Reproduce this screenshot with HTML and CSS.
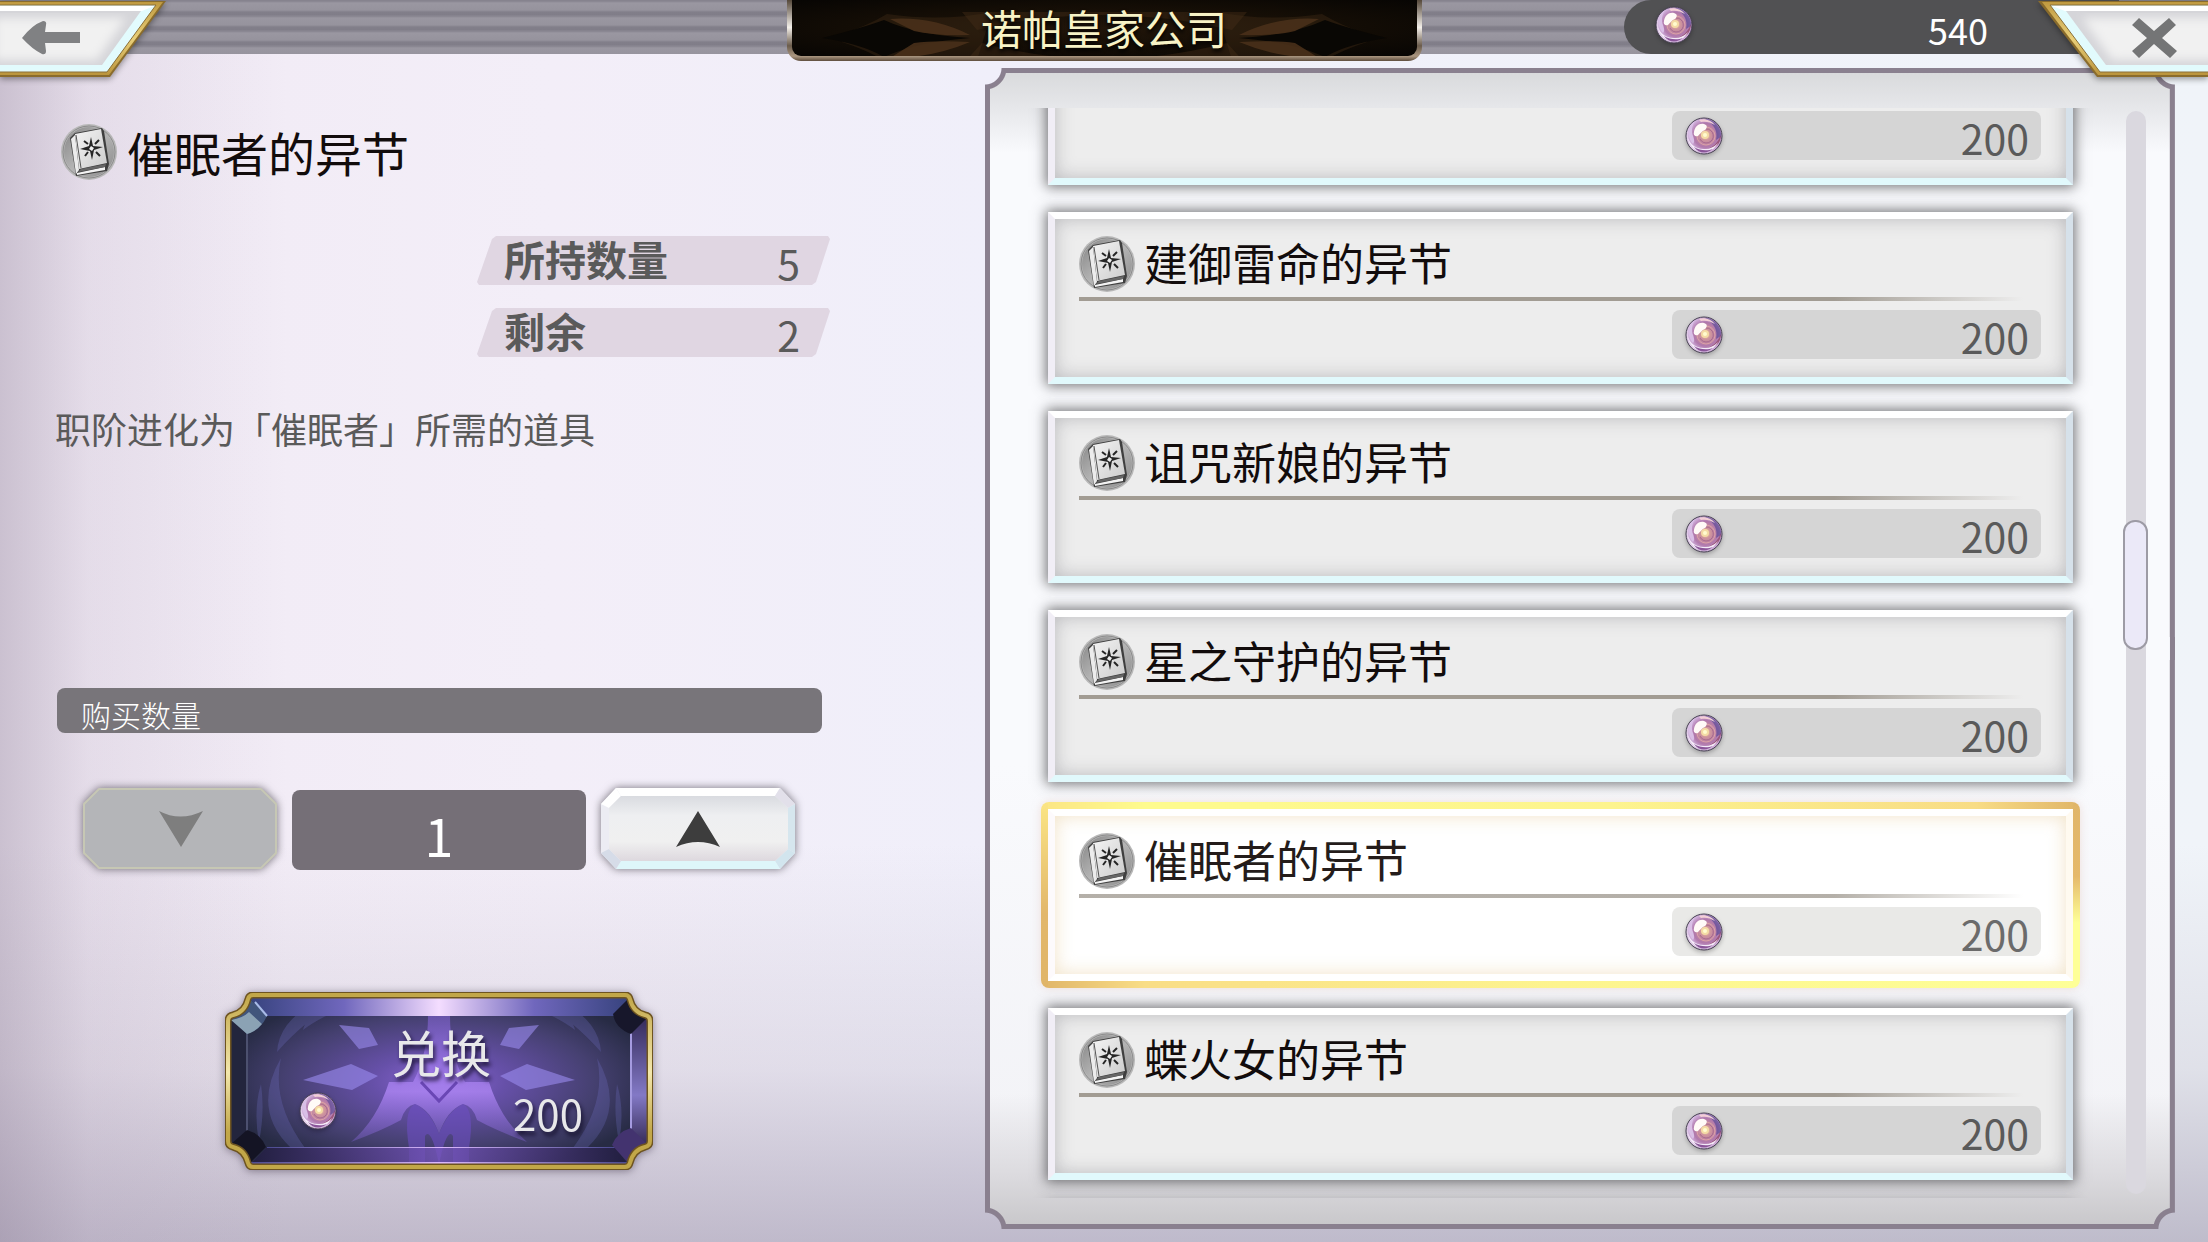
FILE: index.html
```html
<!DOCTYPE html>
<html lang="zh-CN">
<head>
<meta charset="utf-8">
<meta name="viewport" content="width=device-width, initial-scale=1">
<title>诺帕皇家公司</title>
<link rel="stylesheet" href="styles.css">
</head>
<body>
<svg class="defs" aria-hidden="true">
  <defs>
    <radialGradient id="gem-body" cx="55%" cy="48%" r="55%">
      <stop offset="0" stop-color="#f3d9a4"/><stop offset=".25" stop-color="#cf949c"/>
      <stop offset=".6" stop-color="#b078ac"/><stop offset=".85" stop-color="#cfaeda"/><stop offset="1" stop-color="#eadcf0"/>
    </radialGradient>
    <linearGradient id="disc" x1="0" x2="1" y1="0" y2="1">
      <stop offset="0" stop-color="#858585"/><stop offset=".5" stop-color="#b4b4b4"/><stop offset="1" stop-color="#8a8a8a"/>
    </linearGradient>
    <linearGradient id="cover" x1="0" x2="1" y1="0" y2="1">
      <stop offset="0" stop-color="#f4f4f4"/><stop offset="1" stop-color="#cccccc"/>
    </linearGradient>
    <linearGradient id="gold" x1="0" x2="0" y1="0" y2="1">
      <stop offset="0" stop-color="#c09a40"/><stop offset=".5" stop-color="#e9cf79"/><stop offset="1" stop-color="#bb953c"/>
    </linearGradient>
    <filter id="soft"><feGaussianBlur stdDeviation="5"/></filter>
  </defs>
  <symbol id="gem" viewBox="0 0 38 38">
    <circle cx="19" cy="19" r="18" fill="url(#gem-body)"/>
    <path d="M20 2c9 0 17 8 16 18l-5 3c2-9-2-16-11-21z" fill="#5d4c96" opacity=".7"/>
    <path d="M36 18c0 9-6 14-14 14 6-2 10-5 14-14z" fill="#8c3f5e" opacity=".7"/>
    <path d="M2 15c0 10 7 17 17 17 6 0 10-2 14-6-4 7-9 10-16 9C8 34 2 26 2 15z" fill="#f4eaf8"/>
    <path d="M9 30c6 4 14 4 19 2-6 5-14 5-19-2z" fill="#8a5599"/>
    <path d="M4 20C2 13 5 7 10 4c-3 5-4 10-2 15 1 3 2 6 0 8-2-2-3-4-4-7z" fill="#d9bfe6"/>
    <path d="M14 3c6-2 12 0 16 5-5-3-9-4-14-3z" fill="#f3cfd6"/>
    <circle cx="21" cy="19" r="9" fill="none" stroke="#e3a9a4" stroke-width="1" opacity=".8"/>
    <path d="M21 12a7 7 0 1 1-6 10" fill="none" stroke="#96547d" stroke-width="1" opacity=".6"/>
    <path d="M9 15c1-6 5-9 10-8 3 1 4 3 1 6-3 1-5 4-7 6-3 1-5-1-4-4z" fill="#fffaf7"/>
    <circle cx="20" cy="18" r="4" fill="#f4dba5"/><circle cx="20" cy="18" r="2" fill="#fffbcf"/>
    <circle cx="19" cy="19" r="18" fill="none" stroke="#443d50" stroke-width="1"/>
  </symbol>
  <symbol id="book" viewBox="0 0 56 56">
    <circle cx="28" cy="28" r="28" fill="#b8b8b8"/>
    <circle cx="28" cy="28" r="26" fill="none" stroke="#8b8b8b"/>
    <circle cx="28" cy="28" r="25" fill="url(#disc)"/>
    <path d="M9 14 14 9 41 4 43 7 48 40 46 47 15 52z" fill="#3f3f3f"/>
    <path d="M10 15 14 11 18 46 15 50z" fill="#ececec"/>
    <path d="M14 10 40 5 46 39 18 45z" fill="url(#cover)"/>
    <path d="M15 11 20 44" stroke="#555" stroke-width="1"/>
    <path d="M16 49 44 43 44 46 16 51z" fill="#f3f3f3"/>
    <path d="M17 48 20 45 45 40 44 43z" fill="#666"/>
    <path d="M30 13 32 22 42 23 33 26 31 36 29 27 19 25 28 22z" fill="#252525"/>
    <path d="M23 17 27 20M38 16 34 20M24 32 27 28M39 32 35 28" stroke="#252525" stroke-width="2"/>
    <path d="M30 22 33 24 31 27 28 25z" fill="#eee"/>
  </symbol>
</svg>

<header class="topbar">
  <button class="corner corner-back" type="button" aria-label="返回">
    <svg width="170" height="82" viewBox="0 0 170 82" aria-hidden="true">
      <path d="M-5 1H166L110 77H-5z" fill="#8a6c2c"/>
      <path d="M-5 2H163L109 75H-5z" fill="url(#gold)"/>
      <path d="M-5 5H156L107 72H-5z" fill="#e2fbfd" stroke="#8a6f38" stroke-width="1"/>
      <path d="M-5 6H154L142 11H-5z" fill="#fff"/>
      <path d="M-5 11H141L102 65H-5z" fill="#d5d5d9"/>
      <path d="M-5 18H126L97 60H-5z" fill="#f1f1f1" filter="url(#soft)"/>
      <path d="M22 38Q32 25 43 21Q47 21 46 25L45 32H80V43H45L46 51Q46 55 42 54Q32 49 22 38z" fill="#808183"/>
    </svg>
  </button>
  <h1 class="plate">
    <svg class="plate-art" viewBox="0 0 625 56" preserveAspectRatio="none" aria-hidden="true">
      <g fill="#49301a">
        <path d="M170 12H455L440 30Q310 0 185 30zM170 65 190 43Q310 75 435 43L455 65z" opacity=".4"/>
        <path d="M50 34Q75 26 95 14Q150 22 200 12L185 60Q130 54 95 62Q75 50 50 42z" opacity=".35"/>
        <path d="M575 34Q550 26 530 14Q475 22 425 12L440 60Q495 54 530 62Q550 50 575 42z" opacity=".35"/>
        <path d="M30 38Q70 28 92 20Q125 35 178 38Q125 42 92 57Q70 44 30 38z" fill="#090704"/>
        <path d="M595 38Q555 28 533 20Q500 35 447 38Q500 42 533 57Q555 44 595 38z" fill="#090704"/>
        <path d="M98 19Q140 16 178 35Q142 36 122 31zM98 58Q140 58 178 42Q142 40 122 43z" opacity=".9"/>
        <path d="M527 19Q485 16 447 35Q483 36 503 31zM527 58Q485 58 447 42Q483 40 503 43z" opacity=".9"/>
      </g>
    </svg>
    <span>诺帕皇家公司</span>
  </h1>
  <div class="wallet">
    <div class="wallet-pill">
      <svg class="gem" aria-hidden="true"><use href="#gem"/></svg>
      <span>540</span>
    </div>
    <button class="corner corner-close" type="button" aria-label="关闭">
      <svg width="170" height="82" viewBox="0 0 170 82" aria-hidden="true">
        <path d="M0 1H180V77H59z" fill="#8a6c2c"/>
        <path d="M4 2H180V75H60z" fill="url(#gold)"/>
        <path d="M12 5H180V72H62z" fill="#e2fbfd" stroke="#8a6f38" stroke-width="1"/>
        <path d="M14 6H180V11H27z" fill="#fff"/>
        <path d="M28 11H180V65H68z" fill="#d5d5d9"/>
        <path d="M44 18H180V60H74z" fill="#f1f1f1" filter="url(#soft)"/>
        <path d="M101 18 116 31 131 18 138 25 124 38 139 51 132 58 116 44 101 58 94 51 109 38 94 25z" fill="#747576"/>
      </svg>
    </button>
  </div>
</header>

<main class="shop">
  <section class="detail">
    <h2 class="detail-name"><svg class="book" aria-hidden="true"><use href="#book"/></svg>催眠者的异节</h2>
    <dl class="stats">
      <div class="stat"><dt>所持数量</dt><dd>5</dd></div>
      <div class="stat"><dt>剩余</dt><dd>2</dd></div>
    </dl>
    <p class="desc">职阶进化为「催眠者」所需的道具</p>
    <label class="qty-label" for="qty">购买数量</label>
    <div class="stepper">
      <button class="step" type="button" disabled aria-label="减少">
        <svg width="194" height="81" viewBox="0 0 194 81" aria-hidden="true">
          <path d="M16 1H178L193 16V65L178 80H16L1 65V16z" fill="#b4b5b8" stroke="#c6c7b4" stroke-width="2"/>
          <path d="M76 23Q97 34 120 23L98 59z" fill="#7e7e7e"/>
        </svg>
      </button>
      <input class="qty" id="qty" type="text" inputmode="numeric" value="1">
      <button class="step" type="button" aria-label="增加">
        <svg width="194" height="81" viewBox="0 0 194 81" aria-hidden="true">
          <defs><linearGradient id="face" x1="0" x2="0" y1="0" y2="1"><stop offset="0" stop-color="#d9dbe0"/><stop offset=".3" stop-color="#eeeff1"/><stop offset=".7" stop-color="#f0f0f0"/><stop offset="1" stop-color="#ddd8de"/></linearGradient></defs>
          <path d="M15 0H179L194 16V65L179 81H15L0 65V16z" fill="#ececf3"/>
          <path d="M15 0H179L174 8H20z" fill="#fff"/>
          <path d="M0 16 15 0 20 8 8 20z" fill="#fff"/>
          <path d="M179 0 194 16 187 20 174 8z" fill="#e2e0ea"/>
          <path d="M194 16V65L187 61V20z" fill="#d6e6ee"/>
          <path d="M194 65 179 81 174 73 187 61z" fill="#d2e5ee"/>
          <path d="M15 81H179L174 73H20z" fill="#def6fa"/>
          <path d="M0 65 15 81 20 73 8 61z" fill="#d6dce8"/>
          <path d="M20 8H174L187 20V61L174 73H20L8 61V20z" fill="url(#face)"/>
          <path d="M97 23 119 59Q97 49 75 59z" fill="#3d3d3d"/>
        </svg>
      </button>
    </div>
    <button class="exchange" type="button">
      <svg class="exchange-art" viewBox="0 0 428 178" preserveAspectRatio="none" aria-hidden="true">
        <defs>
          <radialGradient id="glow" cx="50%" cy="50%" r="52%"><stop offset="0" stop-color="#8a66d4"/><stop offset=".3" stop-color="#6650a8"/><stop offset=".7" stop-color="#454070"/><stop offset="1" stop-color="#272b44"/></radialGradient>
          <linearGradient id="bevel-top"><stop offset="0" stop-color="#37437e"/><stop offset=".25" stop-color="#7067bd"/><stop offset=".5" stop-color="#f4ddff"/><stop offset=".75" stop-color="#7067bd"/><stop offset="1" stop-color="#37437e"/></linearGradient>
          <linearGradient id="bevel-bottom"><stop offset="0" stop-color="#1f1b3d"/><stop offset=".5" stop-color="#7656bd"/><stop offset="1" stop-color="#1f1b3d"/></linearGradient>
          <linearGradient id="line-glow"><stop offset="0" stop-color="#4b4a90"/><stop offset=".5" stop-color="#dcb8ff"/><stop offset="1" stop-color="#4b4a90"/></linearGradient>
          <linearGradient id="bevel-right" x1="0" x2="0" y1="0" y2="1"><stop offset="0" stop-color="#332a58"/><stop offset=".6" stop-color="#8379c6"/><stop offset="1" stop-color="#30264f"/></linearGradient>
          <linearGradient id="rim" x1="0" x2="0" y1="0" y2="1"><stop offset="0" stop-color="#c2a748"/><stop offset=".45" stop-color="#f3e7ac"/><stop offset=".8" stop-color="#c2a748"/></linearGradient>
          <linearGradient id="emblem" x1="0" x2="0" y1="0" y2="1"><stop offset="0" stop-color="#8a68e0" stop-opacity=".5"/><stop offset=".6" stop-color="#ae86f4" stop-opacity=".8"/><stop offset="1" stop-color="#7c60cc" stop-opacity=".4"/></linearGradient>
          <path id="plaque" d="M28 3H400Q404 3 405 7Q408 20 420 23Q425 24 425 29V149Q425 154 420 155Q408 158 405 171Q404 175 400 175H28Q24 175 23 171Q20 158 8 155Q3 154 3 149V29Q3 24 8 23Q20 20 23 7Q24 3 28 3z"/>
          <clipPath id="plaque-clip"><use href="#plaque"/></clipPath>
        </defs>
        <g clip-path="url(#plaque-clip)">
          <rect width="428" height="178" fill="url(#glow)"/>
          <g fill="#7f7fe0" opacity=".22">
            <path d="M52 60Q54 30 88 12H130Q96 24 78 38Q80 30 83 30Q66 44 52 60z"/>
            <path d="M376 60Q374 30 340 12H298Q332 24 350 38Q348 30 345 30Q362 44 376 60z"/>
            <path d="M56 66Q46 110 80 156H66Q26 118 56 66zM372 66Q382 110 348 156H362Q402 118 372 66z"/>
            <path d="M36 92Q28 118 34 150Q40 120 36 92zM392 92Q400 118 394 150Q388 120 392 92z"/>
          </g>
          <g fill="#9b8cf0" opacity=".6">
            <path d="M114 33 144 36 153 53 134 57zM314 33 284 36 275 53 294 57z"/>
            <path d="M78 88 126 72 153 84 127 98zM350 88 302 72 275 84 301 98z"/>
          </g>
          <path d="M203 24H225Q225 62 240 90H264Q276 128 302 150Q270 138 252 128Q248 114 238 112Q222 118 214 142Q206 118 190 112Q180 114 176 128Q158 138 126 150Q152 128 164 90H188Q203 62 203 24z" fill="url(#emblem)"/>
          <path d="M190 112Q206 120 214 142Q222 120 238 112Q250 118 244 156V172H228V144Q222 134 214 172Q206 134 200 144V172H184V156Q178 118 190 112z" fill="#6c4fc2" opacity=".6"/>
          <path d="M196 90 214 109 232 90" fill="none" stroke="#6a47b5" stroke-width="3"/>
          <path d="M24 6H404L391 24H42z" fill="url(#bevel-top)"/>
          <path d="M42 155H390L404 174H24z" fill="url(#bevel-bottom)" opacity=".8"/>
          <path d="M42 155H390V156H42z" fill="url(#line-glow)"/>
          <path d="M24 170H404V173H24z" fill="url(#line-glow)"/>
          <path d="M6 24 22 41V140L6 156z" fill="#23253d"/>
          <path d="M22 41V140" stroke="#4c506f" stroke-width="2"/>
          <path d="M422 24 406 41V140L422 156z" fill="url(#bevel-right)"/>
          <path d="M406 41V140" stroke="#a59be0" stroke-width="2"/>
          <path d="M24 6 42 24Q36 38 22 42L6 26Q20 24 24 6z" fill="#41557c"/>
          <path d="M6 28Q18 26 24 20L37 32Q30 40 22 42z" fill="#8ba2b4"/>
          <path d="M30 10 42 24" stroke="#a9bce8" stroke-width="2"/>
          <path d="M404 6 388 22Q390 36 406 42L422 26Q408 22 404 6z" fill="#17172b"/>
          <path d="M24 172 41 155Q36 142 22 138L6 152Q20 156 24 172z" fill="#141424"/>
          <path d="M404 172 387 153Q392 140 406 136L422 152Q408 156 404 172z" fill="#43336f"/>
        </g>
        <use href="#plaque" fill="none" stroke="#6e5420" stroke-width="7"/>
        <use href="#plaque" fill="none" stroke="url(#rim)" stroke-width="4"/>
      </svg>
      <span class="exchange-title">兑换</span>
      <span class="exchange-cost"><svg class="gem" aria-hidden="true"><use href="#gem"/></svg><span>200</span></span>
    </button>
  </section>

  <section class="panel">
    <div class="viewport">
      <ul class="items">
        <li><button class="card" type="button"><span class="card-name"></span><span class="rule"></span><span class="price"><svg class="gem" aria-hidden="true"><use href="#gem"/></svg><span>200</span></span></button></li>
        <li><button class="card" type="button"><span class="card-name"><svg class="book" aria-hidden="true"><use href="#book"/></svg><span>建御雷命的异节</span></span><span class="rule"></span><span class="price"><svg class="gem" aria-hidden="true"><use href="#gem"/></svg><span>200</span></span></button></li>
        <li><button class="card" type="button"><span class="card-name"><svg class="book" aria-hidden="true"><use href="#book"/></svg><span>诅咒新娘的异节</span></span><span class="rule"></span><span class="price"><svg class="gem" aria-hidden="true"><use href="#gem"/></svg><span>200</span></span></button></li>
        <li><button class="card" type="button"><span class="card-name"><svg class="book" aria-hidden="true"><use href="#book"/></svg><span>星之守护的异节</span></span><span class="rule"></span><span class="price"><svg class="gem" aria-hidden="true"><use href="#gem"/></svg><span>200</span></span></button></li>
        <li><button class="card is-selected" type="button" aria-pressed="true"><span class="card-name"><svg class="book" aria-hidden="true"><use href="#book"/></svg><span>催眠者的异节</span></span><span class="rule"></span><span class="price"><svg class="gem" aria-hidden="true"><use href="#gem"/></svg><span>200</span></span></button></li>
        <li><button class="card" type="button"><span class="card-name"><svg class="book" aria-hidden="true"><use href="#book"/></svg><span>蝶火女的异节</span></span><span class="rule"></span><span class="price"><svg class="gem" aria-hidden="true"><use href="#gem"/></svg><span>200</span></span></button></li>
        <li class="next-card" aria-hidden="true"></li>
      </ul>
    </div>
    <div class="scrollbar"><div class="thumb"></div></div>
  </section>
</main>
</body>
</html>
```
FILE: styles.css
```css
* { box-sizing: border-box; }

body {
  margin: 0;
  height: 100vh;
  min-height: 1000px;
  display: flex;
  flex-direction: column;
  overflow: hidden;
  font-family: "Noto Sans CJK SC", "Noto Sans", sans-serif;
  color: #5a5a5a;
  background:
    linear-gradient(90deg, rgba(140, 125, 150, .38) 0, rgba(170, 155, 180, .18) 4%, transparent 13%),
    linear-gradient(180deg, transparent 68%, rgba(175, 168, 185, .25) 86%, rgba(150, 142, 165, .55) 100%),
    linear-gradient(90deg, #f1eaf4 0, #f3eef8 25%, #f0effa 45%, #f0f4f9 100%);
}

button, input { font: inherit; color: inherit; border: 0; padding: 0; margin: 0; background: none; }
h1, h2, p, dl, dd, ul { margin: 0; padding: 0; font-weight: 400; }
svg { display: block; }

.defs { position: absolute; width: 0; height: 0; }
.gem { width: 38px; height: 38px; flex: none; filter: drop-shadow(0 2px 2px rgba(0, 0, 0, .25)); }
.book { width: 56px; height: 56px; flex: none; }

/* Top bar */
.topbar {
  position: relative;
  z-index: 2;
  flex: none;
  height: 54px;
  display: grid;
  grid-template-columns: 1fr auto 1fr;
  align-items: start;
  background: repeating-linear-gradient(180deg, #86838e 0, #86838e 1px, #9a97a1 3px, #96939d 10px, #827f8a 12px, #807d88 15px);
}
.corner { height: 82px; filter: drop-shadow(0 2px 3px rgba(0, 0, 0, .4)); }
.corner-back { justify-self: start; }
.plate {
  position: relative;
  width: 635px;
  height: 61px;
  border: 5px solid;
  border-top: 0;
  border-color: transparent;
  border-radius: 0 0 14px 14px;
  background:
    radial-gradient(ellipse at center, #22160a 0, #120c05 60%, #070503 100%) padding-box,
    linear-gradient(180deg, #55483a 0, #f4f0ea 45%, #6b5c4c 75%, #ab9781 92%, #5e4d3d 100%) border-box;
  text-align: center;
  font-size: 41px;
  line-height: 54px;
  color: #f8f3c6;
}
.plate-art { position: absolute; inset: 0; width: 100%; height: 100%; }
.plate span { position: relative; text-shadow: 0 3px 4px #000; }
.wallet { display: flex; align-items: flex-start; justify-content: flex-end; }
.wallet-pill {
  width: 495px;
  height: 54px;
  margin-right: -81px;
  padding: 0 131px 0 31px;
  display: flex;
  align-items: flex-start;
  justify-content: space-between;
  border-radius: 27px 0 0 27px;
  background: #515153;
  color: #fff;
  font-size: 36px;
  line-height: 58px;
}
.wallet-pill .gem { margin-top: 6px; }

/* Page columns */
.shop {
  flex: 1;
  min-height: 0;
  display: grid;
  grid-template-columns: 985fr 1190fr;
  padding: 14px 33px 13px 0;
}

/* Selected item */
.detail { padding: 56px 154px 0 57px; }
.detail-name {
  display: flex;
  align-items: center;
  gap: 10px;
  padding-left: 4px;
  font-size: 47px;
  line-height: 56px;
  color: #120c0c;
}
.stats { width: 353px; margin: 56px 0 0 420px; display: grid; gap: 23px; }
.stat {
  display: flex;
  justify-content: space-between;
  height: 49px;
  padding: 0 30px 0 27px;
  font-size: 41px;
  line-height: 52px;
  background: #e0d6e2;
  clip-path: polygon(19px 0, 351px 0, 353px 3px, 339px 46px, 335px 49px, 2px 49px, 0 46px, 15px 3px);
}
.stat dt { font-weight: 700; line-height: 44px; }
.desc { margin: 45px 0 0 -2px; font-size: 36px; line-height: 52px; white-space: nowrap; }
.qty-label {
  display: block;
  width: 765px;
  height: 45px;
  margin-top: 234px;
  padding-left: 24px;
  border-radius: 8px;
  background: #78757a;
  color: #fff;
  font-size: 30px;
  font-weight: 300;
  line-height: 52px;
}
.stepper { display: flex; gap: 15px; margin: 55px 0 0 26px; }
.step { height: 81px; filter: drop-shadow(0 0 4px rgba(60, 55, 65, .7)); }
.qty {
  width: 294px;
  height: 80px;
  margin-top: 2px;
  padding-top: 8px;
  border-radius: 8px;
  background: #756f77;
  color: #fff;
  font-size: 52px;
  line-height: 68px;
  text-align: center;
}
.exchange {
  position: relative;
  display: flex;
  flex-direction: column;
  align-items: center;
  width: 428px;
  height: 178px;
  margin: 122px 0 0 168px;
  padding: 24px 70px 30px 74px;
  filter: drop-shadow(0 1px 4px rgba(50, 40, 60, .5));
}
.exchange-art { position: absolute; inset: 0; width: 100%; height: 100%; }
.exchange span {
  position: relative;
  color: #e8e8ea;
  text-shadow: 2px 4px 4px rgba(15, 10, 35, .8);
}
.exchange-title { font-size: 50px; line-height: 70px; }
.exchange-cost {
  width: 100%;
  display: flex;
  justify-content: space-between;
  align-items: flex-start;
  font-size: 42px;
  line-height: 54px;
}
.exchange-cost .gem { margin-top: 6px; }

/* Item list panel with notched corners */
.panel {
  position: relative;
  display: grid;
  grid-template-columns: 1fr 25px;
  gap: 30px;
  padding: 40px 27px 31px 43px;
  min-height: 0;
}
.panel::before, .panel::after {
  content: "";
  position: absolute;
  --at: 0px;
  --cut: 16px;
  -webkit-mask:
    radial-gradient(circle at var(--at) var(--at), transparent var(--cut), #000 calc(var(--cut) + 1px)) 0 0 / 51% 51% no-repeat,
    radial-gradient(circle at calc(100% - var(--at)) var(--at), transparent var(--cut), #000 calc(var(--cut) + 1px)) 100% 0 / 51% 51% no-repeat,
    radial-gradient(circle at var(--at) calc(100% - var(--at)), transparent var(--cut), #000 calc(var(--cut) + 1px)) 0 100% / 51% 51% no-repeat,
    radial-gradient(circle at calc(100% - var(--at)) calc(100% - var(--at)), transparent var(--cut), #000 calc(var(--cut) + 1px)) 100% 100% / 51% 51% no-repeat;
}
.panel::before { inset: 0; background: #8a808f; }
.panel::after {
  --at: -5px;
  --cut: 21px;
  inset: 5px;
  background:
    linear-gradient(180deg, #d9dadc 0, #e5e6e9 32px, rgba(248, 248, 252, 0) 80px),
    linear-gradient(0deg, #c9c8cb 0, #dcdbdf 50px, rgba(240, 239, 244, 0) 130px),
    linear-gradient(180deg, #f9fafd 0, #f9fafd 60%, #f1f1f5 100%);
}
.viewport { position: relative; z-index: 1; overflow: hidden; padding: 0 20px; min-height: 0; }
.items { margin-top: -95px; list-style: none; display: grid; gap: 27px; }
.card {
  display: block;
  width: 100%;
  height: 172px;
  padding: 17px 25px 18px 24px;
  border: 7px solid;
  border-color: #fff #d6e1ea #e1f9fc #f1eef6;
  background: #ededed;
  box-shadow: 0 0 12px 2px rgba(60, 60, 62, .7), inset 0 0 18px rgba(90, 88, 98, .35);
  text-align: left;
}
.card-name {
  display: flex;
  height: 56px;
  gap: 9px;
  font-size: 44px;
  line-height: 52px;
  color: #120c0c;
}
.rule {
  display: block;
  height: 4px;
  margin: 5px 18px 9px 0;
  background: linear-gradient(90deg, #a29c93 80%, rgba(162, 156, 147, 0));
}
.price {
  display: flex;
  justify-content: space-between;
  width: 369px;
  height: 49px;
  margin-left: auto;
  padding: 6px 12px 0 13px;
  border-radius: 8px;
  background: #d5d5d5;
  color: #5a5a5a;
  font-size: 41px;
  line-height: 41px;
}
.card.is-selected {
  background: #fff;
  border-color: #fff #fffaf0 #fff #fdfafc;
  box-shadow: inset 0 0 18px rgba(225, 190, 130, .45);
}
.is-selected .card-name { color: #241c1a; }
.is-selected .rule { opacity: .8; }
.is-selected .price { background: #e9e9e7; color: #6b6b6b; }
li:has(.is-selected) {
  margin: -7px;
  padding: 7px;
  border-radius: 8px;
  background:
    linear-gradient(180deg, #fbe584, #e2b76b 60%, #e0b568) 0 0 / 7px 100% no-repeat,
    linear-gradient(180deg, #e0b568, #e5b96b 40%, #feff97 65%) 100% 0 / 7px 100% no-repeat,
    linear-gradient(90deg, #fbe584, #fefb8e 10%, #fdf48e 55%, #f8dc85 90%, #e0b568) 0 0 / 100% 7px no-repeat,
    linear-gradient(90deg, #e0b568, #f9dd86 10%, #fdf48e 50%, #feff97) 0 100% / 100% 7px no-repeat;
  box-shadow: 0 0 8px rgba(230, 200, 190, .5);
}
.next-card { height: 172px; box-shadow: 0 0 12px 2px rgba(60, 60, 62, .7); }

.scrollbar {
  position: relative;
  z-index: 1;
  margin: 3px 2px 4px 3px;
  padding-top: 409px;
  border-radius: 10px;
  background: #dad8df;
}
.thumb {
  height: 130px;
  margin: 0 -2px 0 -3px;
  border: 2px solid #9d9ba5;
  border-radius: 12px;
  background: #ebe9f8;
}
```
